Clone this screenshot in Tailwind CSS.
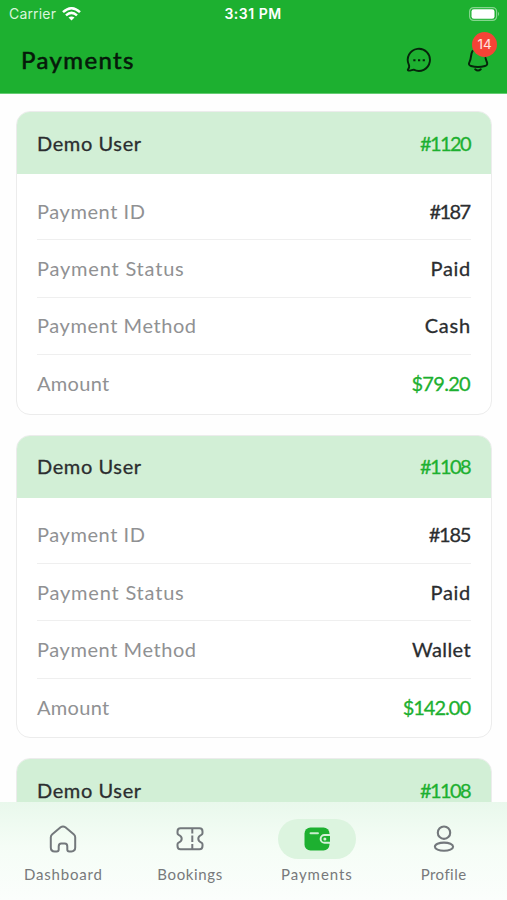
<!DOCTYPE html>
<html lang="en">
<head>
<meta charset="utf-8">
<title>Payments</title>
<script src="https://cdn.jsdelivr.net/npm/@tailwindcss/browser@4"></script>
</head>
<body class="bg-white font-['Lato',sans-serif]">
<div class="relative flex h-[900px] w-[507px] flex-col overflow-hidden bg-[#fefefe]">
  <header class="h-[94px] shrink-0 border-b border-[#65cc72] bg-[#1db030]">
    <div class="grid h-[27px] grid-cols-3 items-center pr-[7px] pl-[9px] font-['Inter',sans-serif] text-[14px] text-white">
      <div class="flex items-center gap-[6px] text-[#d9f5dc]"><span class="tracking-[0.18px]">Carrier</span>
        <svg class="h-[14px] w-[19px]" viewBox="0 0 19 14" fill="none" stroke="white" stroke-width="2.5"><path d="M1 5.2Q9.500-2.600 18 5.200M4 8.400Q9.500 3.400 15 8.400"/><path d="M6.500 10.500Q9.500 8.300 12.500 10.500L9.500 13.600Z" fill="white" stroke="none"/></svg>
      </div>
      <div class="-ml-[3px] text-center font-semibold tracking-[0.5px] whitespace-nowrap">3:31 PM</div>
      <div class="flex justify-end"><svg class="h-[14px] w-[31px]" viewBox="0 0 31 14"><rect x=".6" y=".6" width="27" height="12.800" rx="4" fill="none" stroke="#85d58e" stroke-width="1.200"/><rect x="2.500" y="2.300" width="23" height="9.400" rx="2.300" fill="white"/><path d="M29 4.800Q31 7 29 9.200Z" fill="#85d58e"/></svg></div>
    </div>
    <div class="flex h-[66px] items-center justify-between pr-[15px] pl-[21px]">
      <h1 class="text-[24px] font-normal tracking-[1.4px] text-[#06190a] [-webkit-text-stroke:0.6px_#06190a]">Payments</h1>
      <div class="flex items-center gap-[34px] text-[#06250b]">
        <svg class="h-[26px] w-[26px]" viewBox="0 0 26 26" fill="none" stroke="currentColor" stroke-width="1.900" stroke-linejoin="round"><path d="M2.800 17.600A11.100 11.100 0 1 1 7.700 22.700C6.300 22.500 5 23.700 2.500 23.600C1.500 23.500 1.700 22.800 2.200 22.100C3.400 20.500 3.400 19 2.800 17.600Z"/><path d="M7.300 13.200h2.200M12 13.200h2.200M16.700 13.200h2.200" stroke-width="1.900"/></svg>
        <div class="relative">
          <svg class="h-[26px] w-[26px]" viewBox="0 0 26 26" fill="none" stroke="currentColor" stroke-width="2" stroke-linecap="round" stroke-linejoin="round"><path d="M6.500 4C4.500 7 5.500 11.500 3.600 14.700C2.300 17 3 18.500 5 19C9.500 20.200 14.500 20.200 19 19C21.500 18.300 21.700 16.500 20.600 14.500L19.500 11"/><path d="M9.200 22.300Q12 24.800 14.800 22.300"/></svg>
          <span class="absolute -top-[15px] left-[6px] grid h-[25px] w-[25px] place-items-center rounded-full bg-[#f64336] font-['Inter',sans-serif] text-[13.500px] leading-none text-[#ffe3e0]">14</span>
        </div>
      </div>
    </div>
  </header>

  <main class="flex flex-col gap-5 px-4 pt-[17px] text-[20px] leading-6 text-[#2b2d2f]">
    <section class="h-[303.700px] w-[476px] shrink-0 overflow-hidden rounded-[14px] border border-[#ececec] bg-white">
      <div class="-mx-px -mt-px flex h-[63px] items-center justify-between bg-[#d2efd6] px-[21px] font-normal [-webkit-text-stroke:0.300px]"><span class="tracking-[0.600px]">Demo User</span><span class="mr-px tracking-[-1.600px] text-[#1db030]">#1120</span></div>
      <div class="px-5 pt-[9px] text-[#909193]">
        <div class="flex h-[57.400px] items-center justify-between border-b border-[#efefef] pb-px"><span class="tracking-[0.57px]">Payment ID</span><span class="mr-[1.500px] tracking-[-1.600px] text-[#2b2d2f] [-webkit-text-stroke:0.300px]">#187</span></div>
        <div class="flex h-[57.400px] items-center justify-between border-b border-[#efefef] pb-px"><span class="tracking-[0.8px]">Payment Status</span><span class="tracking-[0.7px] text-[#2b2d2f] [-webkit-text-stroke:0.300px]">Paid</span></div>
        <div class="flex h-[57.400px] items-center justify-between border-b border-[#efefef] pb-px"><span class="tracking-[0.57px]">Payment Method</span><span class="tracking-[0.8px] text-[#2b2d2f] [-webkit-text-stroke:0.300px]">Cash</span></div>
        <div class="flex h-[57.400px] items-center justify-between pb-px"><span class="tracking-[0.3px]">Amount</span><span class="mr-px tracking-[-0.700px] text-[#1db030] [-webkit-text-stroke:0.300px]">$79.20</span></div>
      </div>
    </section>
    <section class="h-[303.700px] w-[476px] shrink-0 overflow-hidden rounded-[14px] border border-[#ececec] bg-white">
      <div class="-mx-px -mt-px flex h-[63px] items-center justify-between bg-[#d2efd6] px-[21px] font-normal [-webkit-text-stroke:0.300px]"><span class="tracking-[0.600px]">Demo User</span><span class="mr-px tracking-[-1.600px] text-[#1db030]">#1108</span></div>
      <div class="px-5 pt-[9px] text-[#909193]">
        <div class="flex h-[57.400px] items-center justify-between border-b border-[#efefef] pb-px"><span class="tracking-[0.57px]">Payment ID</span><span class="mr-px tracking-[-1.300px] text-[#2b2d2f] [-webkit-text-stroke:0.300px]">#185</span></div>
        <div class="flex h-[57.400px] items-center justify-between border-b border-[#efefef] pb-px"><span class="tracking-[0.8px]">Payment Status</span><span class="tracking-[0.7px] text-[#2b2d2f] [-webkit-text-stroke:0.300px]">Paid</span></div>
        <div class="flex h-[57.400px] items-center justify-between border-b border-[#efefef] pb-px"><span class="tracking-[0.57px]">Payment Method</span><span class="tracking-[0.4px] text-[#2b2d2f] [-webkit-text-stroke:0.300px]">Wallet</span></div>
        <div class="flex h-[57.400px] items-center justify-between pb-px"><span class="tracking-[0.3px]">Amount</span><span class="mr-px tracking-[-1px] text-[#1db030] [-webkit-text-stroke:0.300px]">$142.00</span></div>
      </div>
    </section>
    <section class="h-[303.700px] w-[476px] shrink-0 overflow-hidden rounded-[14px] border border-[#ececec] bg-white">
      <div class="-mx-px -mt-px flex h-[63px] items-center justify-between bg-[#d2efd6] px-[21px] font-normal [-webkit-text-stroke:0.300px]"><span class="tracking-[0.600px]">Demo User</span><span class="mr-px tracking-[-1.600px] text-[#1db030]">#1108</span></div>
    </section>
  </main>

  <nav class="absolute inset-x-0 bottom-0 grid h-[98px] grid-cols-4 bg-linear-to-b from-[#e9f8ec] via-[#f5fdf6] via-45% to-[#fbfefc] pt-[17px] text-[15px] leading-5 text-[#77797b]">
    <div class="flex flex-col items-center gap-[5px]">
      <div class="grid h-10 w-[78px] place-items-center"><svg class="h-7 w-7" viewBox="0 0 28 28" fill="none" stroke="#73787c" stroke-width="2" stroke-linejoin="round"><path d="M1.800 12.300Q1.800 10.400 3.300 9.200L11.600 2.300Q14 .5 16.400 2.300L24.700 9.200Q26.200 10.400 26.200 12.300V22.600Q26.200 26.400 22.400 26.400H20.300Q18.300 26.400 18.300 24.400V21.500Q18.300 18.600 15.800 18.600H12.200Q9.700 18.600 9.700 21.500V24.400Q9.700 26.400 7.700 26.400H5.600Q1.800 26.400 1.800 22.600Z"/></svg></div>
      <span class="tracking-[0.8px]">Dashboard</span>
    </div>
    <div class="flex flex-col items-center gap-[5px]">
      <div class="grid h-10 w-[78px] place-items-center"><svg class="h-7 w-7" viewBox="0 0 28 28" fill="none" stroke="#73787c" stroke-width="2" stroke-linejoin="round"><path d="M4.500 3.300H23.500Q26.500 3.300 26.500 6.500V8.300Q26.500 9.300 25.300 9.900C21.300 11.700 21.300 15.800 25.300 17.600Q26.500 18.200 26.500 19.200V21Q26.500 24.200 23.500 24.200H4.500Q1.500 24.200 1.500 21V19.200Q1.500 18.200 2.700 17.600C6.700 15.800 6.700 11.700 2.700 9.900Q1.500 9.300 1.500 8.300V6.500Q1.500 3.300 4.500 3.300Z"/><path d="M16.300 3.500v5M16.300 10.500v6.500M16.300 19v5"/></svg></div>
      <span class="tracking-[0.650px]">Bookings</span>
    </div>
    <div class="flex flex-col items-center gap-[5px]">
      <div class="grid h-10 w-[78px] place-items-center rounded-full bg-[#dcf4df]"><svg class="h-7 w-7" viewBox="0 0 28 28"><rect x="1.500" y="2.500" width="25" height="23" rx="6" fill="#1db030"/><path d="M7.500 8.200H15" stroke="#c9edce" stroke-width="1.900" stroke-linecap="round"/><path d="M27 10H21.500A3.900 3.900 0 0 0 21.500 17.800H27" fill="#1db030" stroke="#d5f1d9" stroke-width="1.900"/><circle cx="21.900" cy="13.900" r="1.500" fill="#d5f1d9"/></svg></div>
      <span class="tracking-[0.950px]">Payments</span>
    </div>
    <div class="flex flex-col items-center gap-[5px]">
      <div class="grid h-10 w-[78px] place-items-center"><svg class="h-7 w-7" viewBox="0 0 28 28" fill="none" stroke="#73787c" stroke-width="2.100"><circle cx="14" cy="7.700" r="6.200"/><ellipse cx="14" cy="21.700" rx="9.100" ry="4.100"/></svg></div>
      <span class="tracking-[0.450px]">Profile</span>
    </div>
  </nav>
</div>
</body>
</html>
